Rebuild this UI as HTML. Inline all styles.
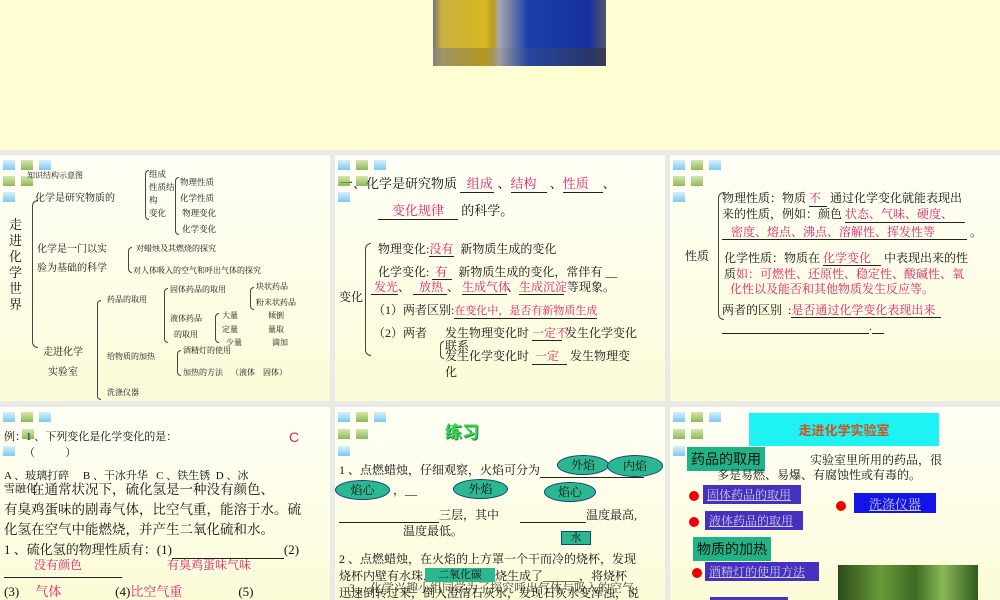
<!DOCTYPE html>
<html><head><meta charset="utf-8"><style>
*{margin:0;padding:0;box-sizing:border-box}
body{width:1000px;height:600px;overflow:hidden;background:#e9e9e6;position:relative;font-family:"Liberation Serif","Noto Serif CJK SC",serif;color:#111}
.p{position:absolute;background:linear-gradient(#fffff6,#fbfbd8);overflow:hidden}
.t{position:absolute;white-space:nowrap;line-height:1.2}
.r{color:#e0206a}
.u{border-bottom:1px solid #222;display:inline-block}
.sq{position:absolute;width:12px;height:10px}
.b{background:linear-gradient(#d6f0fc,#7fc8ef)}
.g{background:linear-gradient(#d6e8b0,#8db85a)}
.br{position:absolute;border:1px solid #444;border-right:none;border-radius:8px 0 0 8px}
.ov{position:absolute;background:#2bb890;border:1px solid #147;border-radius:50%;font-size:12px;text-align:center;color:#111}
.gb{position:absolute;background:#1fb387;font-family:"Liberation Sans","Noto Sans CJK SC",sans-serif;font-size:14px;padding:2px 4px}
.lk{position:absolute;background:#4530c0;color:#ccd;text-decoration:underline;font-size:12px;padding:1px 4px}
.dot{position:absolute;width:10px;height:10px;border-radius:50%;background:#e00}
</style></head><body>
<div style="position:absolute;left:0;top:0;width:1000px;height:150px;background:#fefed2"></div>
<div style="position:absolute;left:433px;top:0;width:173px;height:66px;background:linear-gradient(90deg,#777 0,#c9b040 5%,#d8b820 30%,#b59c28 35%,#aaa 38%,#1a3fa8 55%,#1530a0 90%,#556 100%)"></div>
<div style="position:absolute;left:433px;top:48px;width:173px;height:18px;background:linear-gradient(90deg,#888 0,#a38a20 30%,#999 38%,#2a4a98 55%,#334 100%);opacity:.7"></div>

<!-- panel 1 -->
<div class="p" style="left:0;top:155px;width:330px;height:246px">
<div class="sq b" style="left:3px;top:5px"></div><div class="sq g" style="left:21px;top:5px"></div><div class="sq b" style="left:39px;top:5px"></div>
<div class="sq g" style="left:3px;top:21px"></div><div class="sq g" style="left:21px;top:21px"></div><div class="sq b" style="left:3px;top:37px"></div>
<div class="t" style="left:27px;top:16px;font-size:8px">知识结构示意图</div>
<div class="t" style="left:9px;top:62px;font-size:13px;line-height:16px;white-space:normal;width:14px">走进化学世界</div>
<div class="br" style="left:32px;top:45px;width:6px;height:148px"></div>
<div class="t" style="left:35px;top:38px;font-size:10px">化学是研究物质的</div>
<div class="br" style="left:145px;top:15px;width:4px;height:50px"></div>
<div class="t" style="left:149px;top:13px;font-size:8.5px;line-height:13px">组成<br>性质结<br>构<br>变化</div>
<div class="br" style="left:175px;top:22px;width:4px;height:58px"></div>
<div class="t" style="left:180px;top:20px;font-size:8.5px;line-height:15.5px">物理性质<br>化学性质<br>&nbsp;物理变化<br>&nbsp;化学变化</div>
<div class="t" style="left:37px;top:85px;font-size:10px;line-height:19px">化学是一门以实<br>验为基础的科学</div>
<div class="br" style="left:128px;top:92px;width:4px;height:26px"></div>
<div class="t" style="left:136px;top:89px;font-size:8px">对蜡烛及其燃烧的探究</div>
<div class="t" style="left:133px;top:111px;font-size:8px">对人体吸入的空气和呼出气体的探究</div>
<div class="t" style="left:43px;top:188px;font-size:10px;line-height:20px">走进化学<br>&nbsp;&nbsp;实验室</div>
<div class="br" style="left:97px;top:145px;width:4px;height:100px"></div>
<div class="t" style="left:107px;top:140px;font-size:8px">药品的取用</div>
<div class="br" style="left:164px;top:133px;width:4px;height:55px"></div>
<div class="t" style="left:170px;top:130px;font-size:8px">固体药品的取用</div>
<div class="br" style="left:250px;top:132px;width:4px;height:23px"></div>
<div class="t" style="left:256px;top:124px;font-size:8px;line-height:16px">块状药品<br>粉末状药品</div>
<div class="t" style="left:170px;top:156px;font-size:8px;line-height:16px">液体药品<br>&nbsp;&nbsp;的取用</div>
<div class="br" style="left:215px;top:158px;width:4px;height:30px"></div>
<div class="t" style="left:222px;top:154px;font-size:8px;line-height:13.5px">大量<br>定量<br>&nbsp;&nbsp;少量</div>
<div class="t" style="left:268px;top:154px;font-size:8px;line-height:13.5px">倾倒<br>量取<br>&nbsp;&nbsp;滴加</div>
<div class="t" style="left:107px;top:197px;font-size:8px">给物质的加热</div>
<div class="br" style="left:177px;top:195px;width:4px;height:26px"></div>
<div class="t" style="left:183px;top:191px;font-size:8px">酒精灯的使用</div>
<div class="t" style="left:183px;top:213px;font-size:8px">加热的方法 &nbsp;&nbsp;&nbsp;（液体 &nbsp;&nbsp;&nbsp;固体）</div>
<div class="t" style="left:107px;top:233px;font-size:8px">洗涤仪器</div>
</div>

<!-- panel 2 -->
<div class="p" style="left:335px;top:155px;width:330px;height:246px">
<div class="sq b" style="left:3px;top:5px"></div><div class="sq g" style="left:21px;top:5px"></div><div class="sq b" style="left:39px;top:5px"></div>
<div class="sq g" style="left:3px;top:21px"></div><div class="sq g" style="left:21px;top:21px"></div><div class="sq b" style="left:3px;top:37px"></div>
<div class="t" style="left:5px;top:21px;font-size:13px">一、化学是研究物质 <span class="u r" style="width:34px">&nbsp;&nbsp;组成</span> 、<span class="u r" style="width:36px">结构</span> 、<span class="u r" style="width:40px">性质</span>、</div>
<div class="t" style="left:43px;top:48px;font-size:13px"><span class="u r" style="width:80px;text-align:center">变化规律</span> 的科学。</div>
<div class="br" style="left:30px;top:88px;width:6px;height:113px"></div>
<div class="t" style="left:4px;top:135px;font-size:12px">变化</div>
<div class="t" style="left:43px;top:87px;font-size:12px">物理变化:<span class="u r" style="width:25px">没有</span> &nbsp;新物质生成的变化</div>
<div class="t" style="left:43px;top:110px;font-size:12px">化学变化: <span class="u r" style="width:20px">&nbsp;有</span> &nbsp;新物质生成的变化，常伴有 __</div>
<div class="t" style="left:36px;top:125px;font-size:12px"><span class="u r" style="width:27px">&nbsp;发光</span>、 <span class="u r" style="width:34px">&nbsp;&nbsp;放热</span>、 <span class="u r" style="width:45px">生成气体</span>、<span class="u r" style="width:45px">生成沉淀</span> 等现象。</div>
<div class="t" style="left:38px;top:148px;font-size:12px">（1）两者区别:<span class="r u" style="font-size:11px">在变化中，是否有新物质生成</span></div>
<div class="t" style="left:38px;top:171px;font-size:12px">（2）两者</div>
<div class="t" style="left:110px;top:171px;font-size:12px">发生物理变化时 <span class="u r" style="width:30px">一定不</span> 发生化学变化</div>
<div class="t" style="left:110px;top:184px;font-size:12px">联系</div>
<div class="br" style="left:105px;top:186px;width:4px;height:18px"></div>
<div class="t" style="left:110px;top:194px;font-size:12px;line-height:15px">发生化学变化时 <span class="u r" style="width:35px">&nbsp;一定</span> 发生物理变<br>化</div>
</div>

<!-- panel 3 -->
<div class="p" style="left:670px;top:155px;width:330px;height:246px">
<div class="sq b" style="left:3px;top:5px"></div><div class="sq g" style="left:21px;top:5px"></div><div class="sq b" style="left:39px;top:5px"></div>
<div class="sq g" style="left:3px;top:21px"></div><div class="sq g" style="left:21px;top:21px"></div><div class="sq b" style="left:3px;top:37px"></div>
<div class="br" style="left:48px;top:37px;width:6px;height:128px"></div>
<div class="t" style="left:15px;top:94px;font-size:12px">性质</div>
<div class="t" style="left:52px;top:36px;font-size:12px;line-height:15px">物理性质：物质 <span class="u r" style="width:18px">不</span> 通过化学变化就能表现出<br>来的性质，例如：颜色 <span class="u r" style="width:120px">状态、气味、硬度、</span></div>
<div class="t" style="left:52px;top:70px;font-size:12px"><span class="u r" style="width:245px">&nbsp;&nbsp;&nbsp;密度、熔点、沸点、溶解性、挥发性等</span> 。</div>
<div class="t" style="left:54px;top:96px;font-size:12px">化学性质：物质在 <span class="u r" style="width:58px">化学变化</span> 中表现出来的性</div>
<div class="t" style="left:54px;top:112px;font-size:12px;line-height:15px">质<span class="r">如：可燃性、还原性、稳定性、酸碱性、氧</span><br>&nbsp;&nbsp;<span class="r">化性以及能否和其他物质发生反应等。</span></div>
<div class="t" style="left:52px;top:148px;font-size:12px">两者的区别 &nbsp;:<span class="u r" style="width:150px">是否通过化学变化表现出来</span></div>
<div class="t" style="left:52px;top:164px;font-size:12px"><span class="u" style="width:147px">&nbsp;</span>.<span class="u" style="width:12px">&nbsp;</span></div>
</div>

<!-- panel 4 -->
<div class="p" style="left:0;top:407px;width:330px;height:193px">
<div class="sq b" style="left:3px;top:5px"></div><div class="sq g" style="left:21px;top:5px"></div><div class="sq b" style="left:39px;top:5px"></div>
<div class="sq g" style="left:22px;top:22px"></div><div class="sq b" style="left:3px;top:39px"></div>
<div class="t" style="left:4px;top:24px;font-size:11px">例：1 、下列变化是化学变化的是：</div>
<div class="t r" style="left:289px;top:22px;font-size:14px;font-family:'Liberation Sans',sans-serif">C</div>
<div class="t" style="left:24px;top:40px;font-size:11px">（ &nbsp;&nbsp;&nbsp;&nbsp;&nbsp;&nbsp;&nbsp;&nbsp;&nbsp;&nbsp;）</div>
<div class="t" style="left:4px;top:63px;font-size:11px">A 、玻璃打碎 &nbsp;&nbsp;&nbsp;&nbsp;B 、干冰升华 &nbsp;&nbsp;C 、铁生锈 &nbsp;D 、冰</div>
<div class="t" style="left:4px;top:76px;font-size:11px">雪融化</div>
<div class="t" style="left:4px;top:73px;font-size:13.5px;line-height:20px">&nbsp;&nbsp;&nbsp;&nbsp;&nbsp;&nbsp;&nbsp;&nbsp;在通常状况下，硫化氢是一种没有颜色、<br>有臭鸡蛋味的剧毒气体，比空气重，能溶于水。硫<br>化氢在空气中能燃烧，并产生二氧化硫和水。</div>
<div class="t" style="left:4px;top:135px;font-size:13px">1 、硫化氢的物理性质有：(1)<span class="u" style="width:112px">&nbsp;</span>(2)</div>
<div class="t r" style="left:34px;top:151px;font-size:12px">没有颜色</div>
<div class="t r" style="left:167px;top:151px;font-size:12px">有臭鸡蛋味气味</div>
<div class="t" style="left:4px;top:156px;font-size:12px"><span class="u" style="width:118px">&nbsp;</span></div>
<div class="t" style="left:4px;top:177px;font-size:13px">(3)<span class="u r" style="width:96px">&nbsp;&nbsp;&nbsp;&nbsp;&nbsp;气体</span>(4)<span class="u r" style="width:108px">比空气重</span>(5) <span class="u" style="width:30px">&nbsp;</span></div>
</div>

<!-- panel 5 -->
<div class="p" style="left:335px;top:407px;width:330px;height:193px">
<div class="sq b" style="left:3px;top:5px"></div><div class="sq g" style="left:21px;top:5px"></div><div class="sq b" style="left:39px;top:5px"></div>
<div class="sq g" style="left:3px;top:22px"></div><div class="sq g" style="left:21px;top:22px"></div><div class="sq b" style="left:3px;top:39px"></div>
<div class="t" style="left:110px;top:14px;font-size:17px;font-weight:bold;color:#3fd25a;font-family:'Noto Sans CJK SC',sans-serif;text-shadow:1px 1px 0 #1a8a30">练习</div>
<div class="t" style="left:4px;top:56px;font-size:12px">1 、点燃蜡烛，仔细观察，火焰可分为<span class="u" style="width:104px">&nbsp;</span></div>
<div class="ov" style="left:222px;top:48px;width:52px;height:20px;line-height:18px">外焰</div>
<div class="ov" style="left:272px;top:48px;width:56px;height:22px;line-height:20px">内焰</div>
<div class="ov" style="left:0;top:73px;width:55px;height:20px;line-height:18px">焰心</div>
<div class="t" style="left:58px;top:76px;font-size:12px">，__</div>
<div class="ov" style="left:118px;top:72px;width:55px;height:20px;line-height:18px">外焰</div>
<div class="ov" style="left:209px;top:75px;width:52px;height:20px;line-height:18px">焰心</div>
<div class="t" style="left:4px;top:101px;font-size:12px"><span class="u" style="width:100px">&nbsp;</span>三层，其中 &nbsp;&nbsp;&nbsp;&nbsp;&nbsp;&nbsp;<span class="u" style="width:66px">&nbsp;</span>温度最高,</div>
<div class="t" style="left:68px;top:117px;font-size:12px">温度最低。</div>
<div style="position:absolute;left:226px;top:124px;width:30px;height:14px;background:#2bb890;border:1px solid #147;font-size:11px;text-align:center;line-height:12px">水</div>
<div class="t" style="left:4px;top:144px;font-size:12px;line-height:17px">2 、点燃蜡烛，在火焰的上方罩一个干而冷的烧杯，发现<br>烧杯内壁有水珠，说明蜡烛燃烧生成了______，将烧杯<br>迅速倒转过来，倒入澄清石灰水，发现石灰水变浑浊，说<br>明蜡烛燃烧生成了</div>
<div style="position:absolute;left:90px;top:161px;width:70px;height:14px;background:#2bb890;font-size:11px;text-align:center;line-height:14px">二氧化碳</div>
<div class="t" style="left:14px;top:174px;font-size:12px;opacity:.8">3 、化学兴趣小组同学为了探究呼出气体与吸入的空气</div>
</div>

<!-- panel 6 -->
<div class="p" style="left:670px;top:407px;width:330px;height:193px">
<div class="sq b" style="left:3px;top:5px"></div><div class="sq g" style="left:21px;top:5px"></div><div class="sq b" style="left:39px;top:5px"></div>
<div class="sq g" style="left:3px;top:22px"></div><div class="sq g" style="left:21px;top:22px"></div><div class="sq b" style="left:3px;top:39px"></div>
<div style="position:absolute;left:79px;top:6px;width:190px;height:33px;background:#1ff2f2;color:#d2501f;font-family:'Noto Sans CJK SC',sans-serif;font-weight:bold;font-size:13px;text-align:center;line-height:33px">走进化学实验室</div>
<div class="gb" style="left:17px;top:40px">药品的取用</div>
<div class="t" style="left:140px;top:46px;font-size:12px">实验室里所用的药品，很</div>
<div class="t" style="left:47px;top:61px;font-size:12px">多是易燃、易爆、有腐蚀性或有毒的。</div>
<div class="dot" style="left:19px;top:84px"></div><div class="lk" style="left:33px;top:78px;width:98px">固体药品的取用</div>
<div class="dot" style="left:19px;top:110px"></div><div class="lk" style="left:35px;top:104px;width:98px">液体药品的取用</div>
<div class="dot" style="left:166px;top:94px"></div><div class="lk" style="left:184px;top:86px;width:82px;height:20px;background:#1414e8;font-size:13px;text-align:center">洗涤仪器</div>
<div class="gb" style="left:23px;top:130px">物质的加热</div>
<div class="dot" style="left:22px;top:161px"></div><div class="lk" style="left:35px;top:155px;width:114px">酒精灯的使用方法</div>
<div style="position:absolute;left:40px;top:190px;width:78px;height:10px;background:#4530c0"></div>
<div style="position:absolute;left:168px;top:158px;width:140px;height:40px;background:linear-gradient(90deg,#2a4a18,#6a9a3a 30%,#3d6a20 55%,#8ab85a 75%,#2f5a1a)"></div>
</div>
</body></html>
